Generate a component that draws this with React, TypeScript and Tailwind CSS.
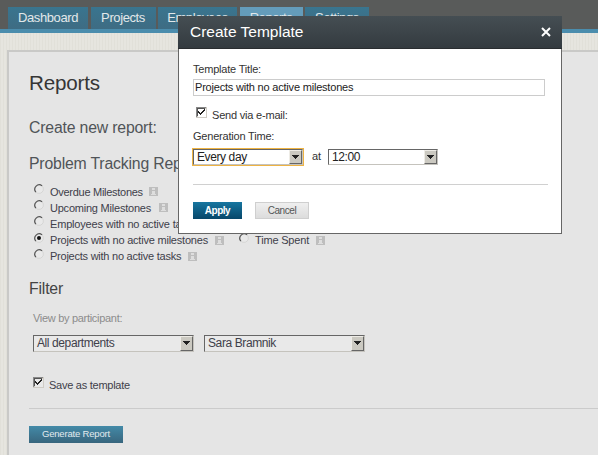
import React from "react";

const tabs = [
  { label: "Dashboard", box: "w-[80px]" },
  { label: "Projects", box: "w-[65px]" },
  { label: "Employees", box: "w-[79px]" },
  { label: "Reports", box: "w-[63px]", active: true },
  { label: "Settings", box: "w-[64px]" },
];

function InfoIcon() {
  return (
    <svg width="9" height="9" viewBox="0 0 9 9" className="shrink-0" shapeRendering="crispEdges">
      <rect width="9" height="9" fill="#bebebe" />
      <path d="M3 1h3v2H3zM3 4h3v3h1v1H2V7h1z" fill="#dedede" />
    </svg>
  );
}

function Radio({ checked = false }: { checked?: boolean }) {
  return (
    <svg width="10" height="10" viewBox="0 0 10 10" className="mb-[5px] shrink-0">
      <circle cx="5" cy="5" r="4.4" fill="#e9e9e9" stroke="#d2d2d0" strokeWidth="0.8" />
      <path d="M1.9 8.1A4.4 4.4 0 0 1 8.1 1.9" fill="none" stroke="#555" strokeWidth="1.2" />
      {checked && <circle cx="5" cy="5" r="2" fill="#111" />}
    </svg>
  );
}

function Check({ fill }: { fill: string }) {
  return (
    <svg width="11" height="11" viewBox="0 0 11 11" className="shrink-0" shapeRendering="crispEdges">
      <rect width="11" height="11" fill="#cfccc5" />
      <path d="M0 0h10v1H1v9H0z" fill="#888" />
      <path d="M1 1h8v1H2v7H1z" fill="#555" />
      <rect x="2" y="2" width="8" height="8" fill={fill} />
      <path d="M2 4h1v1h1v1h1V5h1V4h1V3h1V2h1v2H8v1H7v1H6v1H5v1H4V7H3V6H2z" fill="#222" />
    </svg>
  );
}

function SelectBox({ label, box, focus = false, dim = false }: { label: string; box: string; focus?: boolean; dim?: boolean }) {
  return (
    <div className={`${box} ${focus ? "ring-1 ring-[#eeb343]" : ""} ${dim ? "h-[17px] bg-[#e9e9e9] text-[#40404a]" : "h-[16px] bg-white text-[#222]"} flex shrink-0 items-center justify-between border border-t-[#666] border-l-[#666] border-r-[#c5c3bd] border-b-[#c5c3bd] pl-[3px]`}>
      <span className="text-[12px] leading-[14px] tracking-[-0.4px] whitespace-nowrap">{label}</span>
      <span className="flex w-[13px] items-center justify-center self-stretch border border-t-[#eeece6] border-l-[#eeece6] border-r-[#666] border-b-[#666] bg-[#cbc9c1]">
        <svg width="7" height="4" viewBox="0 0 7 4" shapeRendering="crispEdges">
          <path d="M0 0h7v1H6v1H5v1H4v1H3V3H2V2H1V1H0z" fill="#222" />
        </svg>
      </span>
    </div>
  );
}

function Option({ label, text, checked }: { label: string; text: string; checked?: boolean }) {
  return (
    <div className="flex h-[16.2px] items-center">
      <Radio checked={checked} />
      <span className={`${text} mr-[7px] ml-[6px] text-[11px] leading-[16px] whitespace-nowrap`}>{label}</span>
      <InfoIcon />
    </div>
  );
}

export default function App() {
  return (
    <div className="relative h-[455px] w-[598px] overflow-hidden bg-[#e4e4de] bg-[repeating-linear-gradient(90deg,#e1e0d9_0_1px,#e6e5df_1px_3px)] font-['Liberation_Sans',Arial,sans-serif]">
      <header className="h-[33px] border-b-4 border-[#4b8dad] bg-[#595b5a] pt-[7px] pl-[8px]">
        <nav className="flex h-[22px] gap-[2.5px]">
          {tabs.map((t) => (
            <div key={t.label} className={`${t.box} ${t.active ? "bg-[#649cba]" : "bg-linear-to-b from-[#39758f] to-[#3e6c83]"} flex shrink-0 items-center justify-center text-[13px] leading-[22px] tracking-[-0.4px] text-[#e2e8ea]`}>
              {t.label}
            </div>
          ))}
        </nav>
      </header>

      <main className="mt-[17px] ml-[7px] h-[405px] border-t-2 border-l-2 border-[#c9c9c7] bg-[#e5e5e5] pl-[20px] tracking-[-0.18px] text-[#40404a]">
        <h1 className="pt-[18px] text-[20.6px] leading-[26px] text-[#363636]">Reports</h1>
        <h2 className="mt-[22px] text-[15.8px] leading-[20px] text-[#505458]">Create new report:</h2>
        <h2 className="mt-[16px] text-[15.8px] leading-[20px] whitespace-nowrap text-[#505458]">Problem Tracking Reports</h2>
        <div className="mt-[9.5px] flex pl-[5px]">
          <div>
            <Option label="Overdue Milestones" text="w-[92px] tracking-[-0.28px]" />
            <Option label="Upcoming Milestones" text="w-[102px] tracking-[-0.22px]" />
            <Option label="Employees with no active tasks" text="w-[150px]" />
            <Option label="Projects with no active milestones" text="w-[158px] tracking-[-0.21px]" checked />
            <Option label="Projects with no active tasks" text="w-[131px] tracking-[-0.24px]" />
          </div>
          <div className="ml-[15px] pt-[48.6px]">
            <Option label="Time Spent" text="w-[54px]" />
          </div>
        </div>
        <h2 className="mt-[14.5px] text-[15.8px] leading-[20px] text-[#444]">Filter</h2>
        <p className="mt-[11px] ml-[4px] text-[11px] leading-[16px] tracking-[-0.3px] text-[#8c8c8c]">View by participant:</p>
        <div className="mt-[9px] ml-[4px] flex gap-[10px]">
          <SelectBox label="All departments" box="w-[161px]" dim />
          <SelectBox label="Sara Bramnik" box="w-[161px]" dim />
        </div>
        <div className="mt-[25px] ml-[4px] flex">
          <Check fill="#e9e9e9" />
          <span className="mt-[1px] ml-[5px] text-[11px] leading-[14px] tracking-[-0.26px]">Save as template</span>
        </div>
        <hr className="mt-[16px] border-[#cbcbcb]" />
        <button className="mt-[17px] flex h-[17px] w-[94px] items-center justify-center bg-linear-to-b from-[#438aa8] to-[#38667e] text-[9.5px] text-[#e3eaee]">
          Generate Report
        </button>
      </main>

      <section className="absolute top-[16px] left-[178px] h-[218px] w-[384px] border border-[#666] bg-white text-[#333]">
        <div className="-mx-px -mt-px flex h-[33px] items-center justify-between border-b border-[#292d30] bg-linear-to-b from-[#454e53] to-[#343b40] pr-[11px] pl-[12px] text-white">
          <h3 className="text-[15.5px] leading-[20px]">Create Template</h3>
          <svg width="10" height="10" viewBox="0 0 10 10">
            <path d="M1 1l8 8M9 1L1 9" stroke="#fff" strokeWidth="2" />
          </svg>
        </div>
        <div className="pl-[14px] text-[11px] tracking-[-0.2px]">
          <p className="mt-[13px] leading-[14px]">Template Title:</p>
          <div className="mt-[3px] flex h-[17px] w-[352px] items-center border border-[#ccc] pl-[1px] text-[#222]">Projects with no active milestones</div>
          <div className="mt-[11px] ml-[3px] flex h-[14px]">
            <Check fill="#fff" />
            <span className="mt-[1px] ml-[5px] leading-[14px]">Send via e-mail:</span>
          </div>
          <p className="mt-[8px] leading-[14px]">Generation Time:</p>
          <div className="mt-[5px] flex h-[17px] items-center">
            <SelectBox label="Every day" box="w-[110px]" focus />
            <span className="ml-[9px] w-[16px]">at</span>
            <SelectBox label="12:00" box="w-[110px]" />
          </div>
          <hr className="mt-[19px] w-[355px] border-[#d0d0d0]" />
          <div className="mt-[17px] flex gap-[13px] text-[10px]">
            <button className="h-[17px] w-[49px] bg-linear-to-b from-[#1776a0] to-[#07476a] font-bold tracking-[-0.5px] text-white">Apply</button>
            <button className="h-[17px] w-[54px] border border-[#cfcfcf] bg-linear-to-b from-[#efefef] to-[#dcdcdc] leading-[15px] tracking-[-0.4px] text-[#555]">Cancel</button>
          </div>
        </div>
      </section>
    </div>
  );
}
